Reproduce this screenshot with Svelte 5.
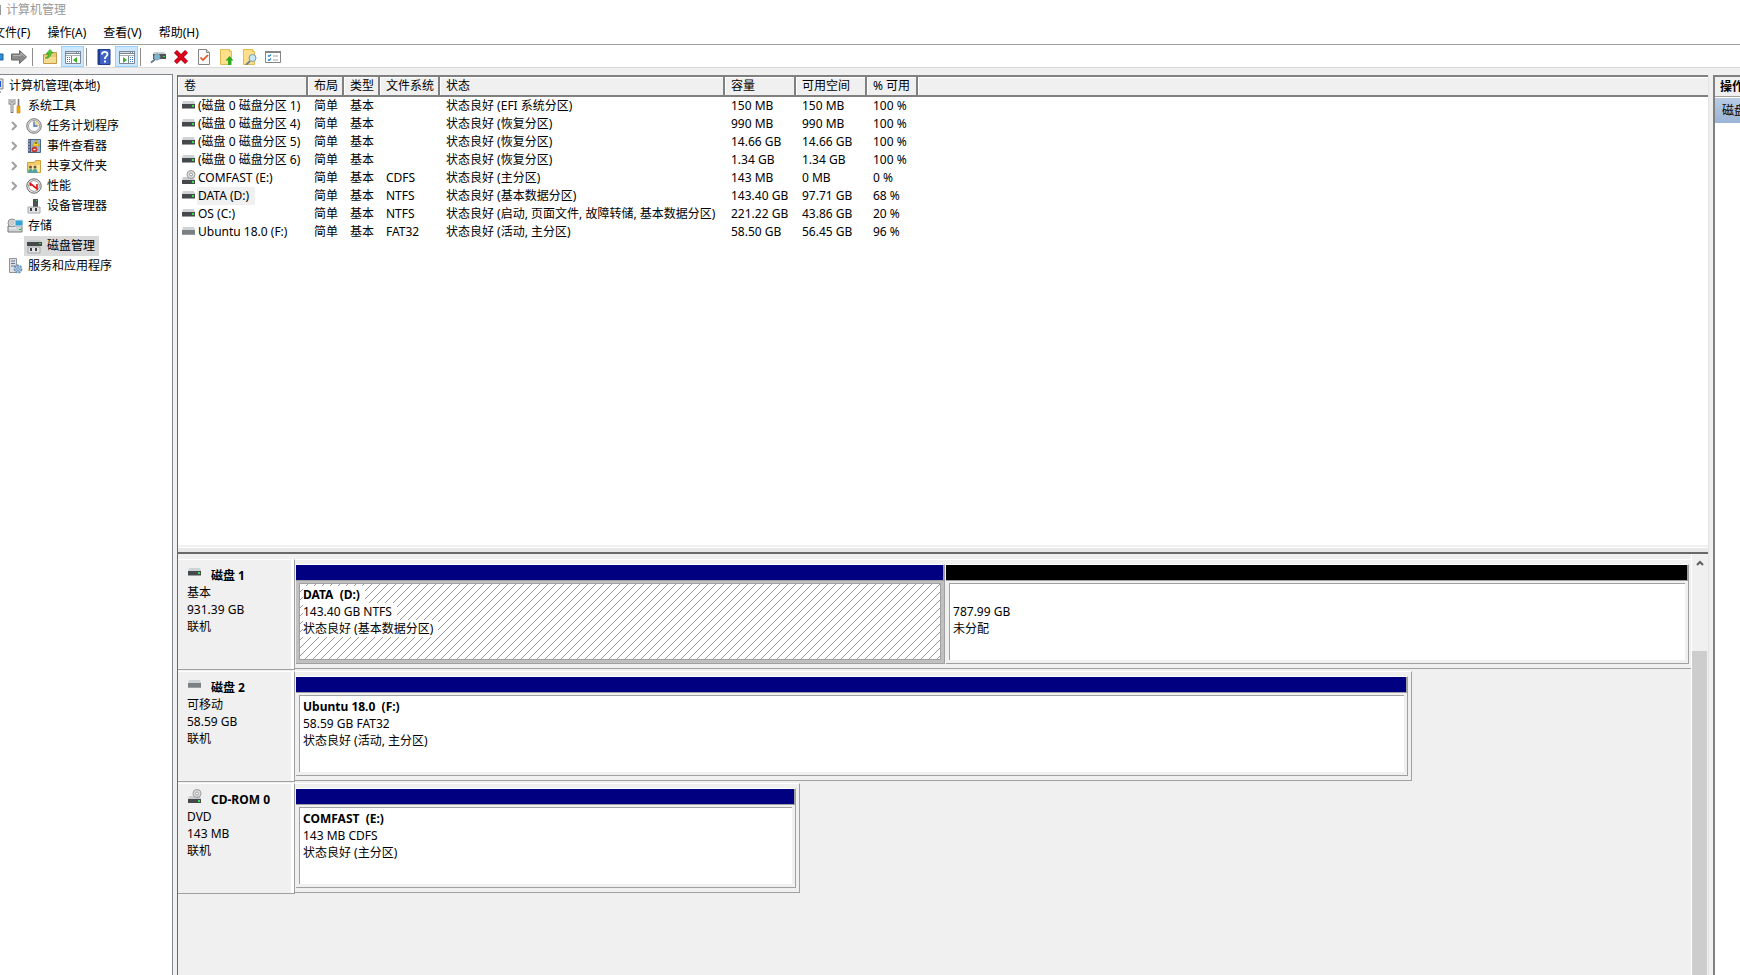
<script>
  const menus = ['文件(F)', '操作(A)', '查看(V)', '帮助(H)'];

  // null marks a separator
  const tools = [
    { icon: 'back', label: '后退' },
    { icon: 'forward', label: '前进' },
    null,
    { icon: 'folder', label: '上移' },
    { icon: 'tree', label: '控制台树', pressed: true },
    null,
    { icon: 'help', label: '帮助' },
    { icon: 'pane', label: '操作窗格', pressed: true },
    null,
    { icon: 'rescan', label: '重新扫描' },
    { icon: 'delete', label: '删除' },
    { icon: 'check', label: '属性' },
    { icon: 'upload', label: '打开' },
    { icon: 'search', label: '浏览' },
    { icon: 'list', label: '设置' },
  ];

  const tree = [
    { level: 0, icon: 'computer', label: '计算机管理(本地)' },
    { level: 1, icon: 'wrench', label: '系统工具' },
    { level: 2, icon: 'clock', label: '任务计划程序', closed: true },
    { level: 2, icon: 'events', label: '事件查看器', closed: true },
    { level: 2, icon: 'shared', label: '共享文件夹', closed: true },
    { level: 2, icon: 'perf', label: '性能', closed: true },
    { level: 2, icon: 'device', label: '设备管理器' },
    { level: 1, icon: 'storage', label: '存储' },
    { level: 2, icon: 'diskmgr', label: '磁盘管理' },
    { level: 1, icon: 'services', label: '服务和应用程序' },
  ];

  const columns = ['卷', '布局', '类型', '文件系统', '状态', '容量', '可用空间', '% 可用'];

  const volumes = [
    { icon: 'drive', cells: ['(磁盘 0 磁盘分区 1)', '简单', '基本', '', '状态良好 (EFI 系统分区)', '150 MB', '150 MB', '100 %'] },
    { icon: 'drive', cells: ['(磁盘 0 磁盘分区 4)', '简单', '基本', '', '状态良好 (恢复分区)', '990 MB', '990 MB', '100 %'] },
    { icon: 'drive', cells: ['(磁盘 0 磁盘分区 5)', '简单', '基本', '', '状态良好 (恢复分区)', '14.66 GB', '14.66 GB', '100 %'] },
    { icon: 'drive', cells: ['(磁盘 0 磁盘分区 6)', '简单', '基本', '', '状态良好 (恢复分区)', '1.34 GB', '1.34 GB', '100 %'] },
    { icon: 'cdrom', cells: ['COMFAST (E:)', '简单', '基本', 'CDFS', '状态良好 (主分区)', '143 MB', '0 MB', '0 %'] },
    { icon: 'drive', cells: ['DATA (D:)', '简单', '基本', 'NTFS', '状态良好 (基本数据分区)', '143.40 GB', '97.71 GB', '68 %'] },
    { icon: 'drive', cells: ['OS (C:)', '简单', '基本', 'NTFS', '状态良好 (启动, 页面文件, 故障转储, 基本数据分区)', '221.22 GB', '43.86 GB', '20 %'] },
    { icon: 'removable', cells: ['Ubuntu 18.0 (F:)', '简单', '基本', 'FAT32', '状态良好 (活动, 主分区)', '58.50 GB', '56.45 GB', '96 %'] },
  ];

  const disks = [
    {
      icon: 'drive', name: '磁盘 1', type: '基本', size: '931.39 GB', status: '联机', width: 100,
      parts: [
        { name: 'DATA  (D:)', size: '143.40 GB NTFS', status: '状态良好 (基本数据分区)', share: 649 },
        { name: '', size: '787.99 GB', status: '未分配', share: 743, free: true },
      ],
    },
    {
      icon: 'removable', name: '磁盘 2', type: '可移动', size: '58.59 GB', status: '联机', width: 80,
      parts: [{ name: 'Ubuntu 18.0  (F:)', size: '58.59 GB FAT32', status: '状态良好 (活动, 主分区)', share: 1 }],
    },
    {
      icon: 'cdrom', name: 'CD-ROM 0', type: 'DVD', size: '143 MB', status: '联机', width: 36.2,
      parts: [{ name: 'COMFAST  (E:)', size: '143 MB CDFS', status: '状态良好 (主分区)', share: 1 }],
    },
  ];

  let selectedNode = $state('磁盘管理');
  let selectedVolume = $state('DATA (D:)');

  function isSelected(part) {
    return part.name.replace('  ', ' ') === selectedVolume;
  }
</script>

{#snippet glyph(name)}
  <svg class="icon" width="16" height="16" viewBox="0 0 16 16" aria-hidden="true">
    {#if name === 'back'}
      <path d="M1 8l7-5v2h7v6H8v2z" fill="#2d8fd6" stroke="#1f5f99" />
    {:else if name === 'forward'}
      <path d="M15.500 8L8.500 1.500V5H.5v6h8v3.500z" fill="#8a8a8a" stroke="#666" />
      <path d="M2 6.500h8V4l4 4" fill="none" stroke="#b5b5b5" />
    {:else if name === 'folder'}
      <path d="M1.500 5.500h5l1-2h7v11h-13z" fill="#e8c877" stroke="#c39b45" />
      <path d="M2 8h12v6H2z" fill="#f4dc94" />
      <path d="M3 9c1 0 3-1 3.500-4H4l4-4.500L11 4H9c0 4-3 6-6 5z" fill="#4fc52f" stroke="#2f9a1b" stroke-width=".6" />
    {:else if name === 'tree' || name === 'pane'}
      <path d="M.5 2.500h15v12H.5z" fill="#fff" stroke="#7b8794" />
      <path d="M0 2h16v3H0z" fill="#7b8794" />
      <path d="M1 3h10v1H1z" fill="#d5dbe0" />
      <path d="M12 3h1v1h-1zM14 3h1v1h-1z" fill="#fff" />
      <path d="M1 6.500h14" stroke="#a8b0b8" />
      {#if name === 'tree'}
        <path d="M6.500 7v8" stroke="#7b8794" />
        <path d="M2 8.500h3M2 10.500h3M2 12.500h3" stroke="#3b78b5" stroke-dasharray="1 1 1" />
        <path d="M12 8v6l-4-3z" fill="#3fae2a" />
      {:else}
        <path d="M9.500 7v8" stroke="#7b8794" />
        <path d="M11 8.500h3M11 10.500h3M11 12.500h3" stroke="#3b78b5" stroke-dasharray="1 1 1" />
        <path d="M4 8v6l4-3z" fill="#3fae2a" />
      {/if}
    {:else if name === 'help'}
      <path d="M2 .5h12v15H2z" fill="#3f63c4" stroke="#233f8e" />
      <path d="M2 1h2v14H2z" fill="#213b8c" />
      <path d="M6 5.500C6 2 11.500 2 11.500 5.300c0 2-2.700 2.200-2.700 4.700" fill="none" stroke="#fff" stroke-width="1.800" />
      <path d="M8 11.500h2v2H8z" fill="#fff" />
    {:else if name === 'rescan'}
      <path d="M4 3h10l2 2H3z" fill="#c9cdd0" />
      <path d="M3 5h13v5H3z" fill="#4d5255" />
      <path d="M13 7h2v1h-2z" fill="#35e035" />
      <circle cx="7" cy="8" r="3" fill="#78b9d9" stroke="#8c9ba6" />
      <path d="M5 10.500l-4 3" stroke="#56748c" stroke-width="1.600" />
    {:else if name === 'delete'}
      <path d="M2.500 2.500l11 11M13.500 2.500l-11 11" stroke="#9e0010" stroke-width="4.200" />
      <path d="M2.500 2.500l11 11M13.500 2.500l-11 11" stroke="#e0061c" stroke-width="2.800" />
    {:else if name === 'check'}
      <path d="M2.500.5h8l3 3v12h-11z" fill="#fafafa" stroke="#858585" />
      <path d="M10.500.5v3h3" fill="#ddd" stroke="#858585" />
      <path d="M4.500 8.500L7 11l5-5" fill="none" stroke="#e8501c" stroke-width="1.700" />
    {:else if name === 'upload' || name === 'search'}
      <path d="M1.500.5h9l2 2v13h-11z" fill="#ffe08a" stroke="#e3bb55" />
      <path d="M10.500.5v2h2" fill="#fff4c8" stroke="#e3bb55" />
      {#if name === 'upload'}
        <path d="M10.500 7l4 4.500h-2.500V16H9v-4.500H6.500z" fill="#2fa81e" />
      {:else}
        <path d="M8 12l-4 4" stroke="#6d8192" stroke-width="1.800" />
        <circle cx="10.500" cy="9" r="3.500" fill="#c8e8f6" stroke="#7899ad" />
      {/if}
    {:else if name === 'list'}
      <path d="M.5 2.500h15v11H.5z" fill="#fff" stroke="#858585" />
      <path d="M0 2h16v2H0z" fill="#858585" />
      <path d="M3 6.500l1 1 2-2M3 10.500l1 1 2-2" fill="none" stroke="#2587d8" stroke-width="1.200" />
      <path d="M8 7h5M8 11h5" stroke="#9ba1a6" />
    {:else if name === 'computer'}
      <path d="M1 1h14v10H1z" fill="#d8dce4" stroke="#888" />
      <path d="M3 3h10v6H3z" fill="#2456d0" />
      <path d="M4 13h9v2H4z" fill="#aaa" />
    {:else if name === 'wrench'}
      <path d="M3 1v4h4V1M5 5v10" fill="none" stroke="#777" stroke-width="2.800" />
      <path d="M3 1v4h4V1M5 5v9" fill="none" stroke="#e2e2e2" stroke-width="1.200" />
      <path d="M11.500 1v8" stroke="#777" stroke-width="1.600" />
      <path d="M10 8h3v7h-3z" fill="#f2a900" stroke="#ca8500" stroke-width=".6" />
    {:else if name === 'clock'}
      <circle cx="8" cy="8" r="7.300" fill="#dcdcdc" stroke="#777" />
      <circle cx="8" cy="8" r="5.500" fill="#f7fbff" stroke="#a3a3a3" />
      <path d="M8 3a5 5 0 0 1 5 5H8z" fill="#f6d999" />
      <path d="M8 3.500V8h3.500" fill="none" stroke="#3d77b8" stroke-width="1.300" />
    {:else if name === 'events'}
      <path d="M2.500 1.500h12v13h-12z" fill="#9cb5d5" stroke="#47688e" />
      <path d="M2 1h3v14H2z" fill="#4c5f83" />
      <path d="M1 3h3M1 6h3M1 9h3M1 12h3" stroke="#c8c8c8" />
      <path d="M10 2l3.500 6h-7z" fill="#ffd42b" stroke="#b98d00" stroke-width=".6" />
      <path d="M10 4v2" stroke="#222" />
      <circle cx="8.500" cy="11.500" r="2.500" fill="#e23b31" stroke="#a81911" stroke-width=".6" />
      <path d="M7.500 11.500h2" stroke="#fff" />
    {:else if name === 'shared'}
      <path d="M1.500 4.500h7l1-2h5v12h-13z" fill="#f1ce6b" stroke="#cda03e" />
      <path d="M3 7h11v7H3z" fill="#fbe59f" />
      <circle cx="4.500" cy="9" r="1.500" fill="#735237" />
      <circle cx="9" cy="9" r="1.500" fill="#735237" />
      <path d="M2 15c0-6 5-6 5 0zM6.500 15c0-6 5-6 5 0z" fill="#54a4a2" />
    {:else if name === 'perf'}
      <circle cx="8" cy="8" r="7.200" fill="#eee" stroke="#666" />
      <circle cx="8" cy="8" r="5.300" fill="#fff" stroke="#999" />
      <path d="M4.500 8V5.500L11 11V6" fill="none" stroke="#dc1818" stroke-width="1.700" />
    {:else if name === 'device' || name === 'diskmgr'}
      {#if name === 'device'}
        <path d="M7 1h5v8H7z" fill="#4c5053" />
        <path d="M10 2h1v1h-1z" fill="#34e34c" />
      {:else}
        <path d="M3 2h11l2 2H1z" fill="#c9cdd0" />
        <path d="M1 4h15v4H1z" fill="#45494c" />
        <path d="M13 5h2v1h-2z" fill="#34e34c" />
      {/if}
      <path d="M2 9h12v6H2z" fill="#e3e4e6" stroke="#a1a5aa" />
      <path d="M4 10h2v3H4zM9 10h2v3H9z" fill="#3c4248" />
    {:else if name === 'storage'}
      <path d="M1 8h14v6H1z" fill="#d2d5d8" stroke="#777" />
      <circle cx="5" cy="5" r="4" fill="#dadada" stroke="#8b8b8b" />
      <circle cx="5" cy="5" r="1.300" fill="#fff" stroke="#8b8b8b" stroke-width=".6" />
      <path d="M8 2h8v6H8z" fill="#31a4d8" stroke="#dce4e8" />
      <path d="M12 11h2v1h-2z" fill="#21b534" />
      <path d="M2 10h7" stroke="#f7f7f7" />
    {:else if name === 'services'}
      <path d="M2.500.5h7v14h-7z" fill="#dce0e4" stroke="#8c949c" />
      <path d="M4 3h4M4 5.500h4M4 8h4" stroke="#69747e" />
      <circle cx="11" cy="11" r="3.500" fill="#b8d3ec" stroke="#638cb2" stroke-width="1.800" stroke-dasharray="2 1" />
      <circle cx="11" cy="11" r="1.300" fill="#fff" stroke="#638cb2" />
    {:else if name === 'cdrom'}
      <path d="M2 7h11l1 3H1z" fill="#c9cdd0" />
      <circle cx="10" cy="4.500" r="4" fill="#dedede" stroke="#999" />
      <circle cx="10" cy="4.500" r="1.500" fill="#fff" stroke="#999" />
      <path d="M1 10h13v4H1z" fill="#45494c" />
      <path d="M11 11h2v2h-2z" fill="#34e34c" />
    {:else}
      <path d="M2 3h11l1 3H1z" fill="#d0d3d6" />
      <path d="M1 6h13v5H1z" fill={name === 'drive' ? '#45494c' : '#7c8083'} />
      <path d="M1 10h13v1H1z" fill="#9a9ea1" />
      {#if name === 'drive'}
        <path d="M11 7h2v2h-2z" fill="#34e34c" />
      {/if}
    {/if}
  </svg>
{/snippet}

<div class="window">
  <header class="titlebar"><span class="app-icon"></span>计算机管理</header>

  <nav class="menubar">
    {#each menus as menu}
      <button type="button">{menu}</button>
    {/each}
  </nav>

  <div class="toolbar">
    {#each tools as tool}
      {#if tool}
        <button type="button" class:pressed={tool.pressed} aria-label={tool.label}>
          {@render glyph(tool.icon)}
        </button>
      {:else}
        <span class="separator"></span>
      {/if}
    {/each}
  </div>

  <div class="content">
    <ul class="tree">
      {#each tree as node}
        <li class="level-{node.level}">
          {#if node.level === 2}
            <svg class="chevron" width="6" height="10" viewBox="0 0 6 10" aria-hidden="true">
              {#if node.closed}<path d="M1 1l4 4-4 4" />{/if}
            </svg>
          {/if}
          <button
            type="button"
            class:selected={node.label === selectedNode}
            onclick={() => (selectedNode = node.label)}
          >
            {@render glyph(node.icon)}<span>{node.label}</span>
          </button>
        </li>
      {/each}
    </ul>

    <main>
      <section class="volumes">
        <table>
          <colgroup>
            <col class="c-name" /><col class="c-short" /><col class="c-short" /><col class="c-fs" />
            <col class="c-status" /><col class="c-size" /><col class="c-size" /><col class="c-percent" /><col />
          </colgroup>
          <thead>
            <tr>
              {#each columns as column}
                <th>{column}</th>
              {/each}
              <th aria-hidden="true"></th>
            </tr>
          </thead>
          <tbody>
            {#each volumes as volume}
              <tr onclick={() => (selectedVolume = volume.cells[0])}>
                {#each volume.cells as cell, i}
                  {#if i === 0}
                    <td class="name">
                      <div>
                        {@render glyph(volume.icon)}<span class:current={cell === selectedVolume}>{cell}</span>
                      </div>
                    </td>
                  {:else}
                    <td>{cell}</td>
                  {/if}
                {/each}
                <td></td>
              </tr>
            {/each}
          </tbody>
        </table>
      </section>

      <section class="graph">
        <div class="disks">
          {#each disks as disk}
            <div class="disk">
              <div class="disk-label">
                <strong>{@render glyph(disk.icon)}{disk.name}</strong>
                <span>{disk.type}</span>
                <span>{disk.size}</span>
                <span>{disk.status}</span>
              </div>
              <div class="track">
                <div class="parts" class:full={disk.width === 100} style="width: {disk.width}%">
                  {#each disk.parts as part}
                    <div class="part" class:free={part.free} class:active={isSelected(part)} style="flex-grow: {part.share}">
                      <div class="stripe"></div>
                      <div class="frame">
                        <div class="info">
                          {#if isSelected(part)}
                            <svg class="hatch" width="100%" height="100%" aria-hidden="true">
                              <defs>
                                <pattern id="hatch" width="8" height="8" patternUnits="userSpaceOnUse">
                                  <path d="M0 7h1v1H0zM1 6h1v1H1zM2 5h1v1H2zM3 4h1v1H3zM4 3h1v1H4zM5 2h1v1H5zM6 1h1v1H6zM7 0h1v1H7z" fill="#999" />
                                </pattern>
                              </defs>
                              <rect width="100%" height="100%" fill="url(#hatch)" />
                            </svg>
                          {/if}
                          <strong>{part.name}</strong>
                          <span>{part.size}</span>
                          <span>{part.status}</span>
                        </div>
                      </div>
                    </div>
                  {/each}
                </div>
              </div>
            </div>
          {/each}
        </div>
        <div class="scrollbar">
          <button type="button" aria-label="向上滚动">
            <svg width="8" height="6" viewBox="0 0 8 6"><path d="M1 5l3-3 3 3" /></svg>
          </button>
          <div class="thumb"></div>
        </div>
      </section>
    </main>

    <aside>
      <h2>操作</h2>
      <button type="button">磁盘管理</button>
    </aside>
  </div>
</div>

<style>
  :global(body) {
    margin: 0;
    overflow: hidden;
  }

  .window {
    display: flex;
    flex-direction: column;
    height: 100vh;
    overflow: hidden;
    background: #f0f0f0;
    color: #000;
    font-family: "Noto Sans", "Noto Sans CJK SC", sans-serif;
    font-size: 12px;
    line-height: 18px;
    white-space: nowrap;
  }

  button {
    padding: 0;
    border: none;
    background: none;
    color: inherit;
    font: inherit;
  }

  .icon {
    display: block;
    flex: none;
  }

  .titlebar {
    display: flex;
    align-items: center;
    gap: 5px;
    height: 20px;
    background: #fff;
    color: #999;
  }

  .app-icon {
    width: 1px;
    height: 10px;
    background: #999;
  }

  .menubar {
    display: flex;
    gap: 17px;
    height: 22px;
    margin-left: -7px;
    padding-top: 2px;
    background: #fff;
    border-bottom: 1px solid #a0a0a0;
  }

  .toolbar {
    display: flex;
    height: 21px;
    margin-left: -16px;
    padding-top: 1px;
    background: #fff;
    border-bottom: 1px solid #d9d9d9;
  }

  .toolbar button {
    display: flex;
    align-items: center;
    justify-content: center;
    box-sizing: border-box;
    width: 23px;
    border: 1px solid transparent;
  }

  .toolbar .pressed {
    background: #cce8ff;
    border-color: #99d1ff;
  }

  .separator {
    width: 1px;
    height: 18px;
    margin: 2px 5px 0 2px;
    background: #8d8d8d;
  }

  .content {
    display: flex;
    flex: 1;
    gap: 4px;
    min-height: 0;
    padding-top: 6px;
  }

  .tree {
    flex: none;
    box-sizing: border-box;
    width: 173px;
    margin: 0;
    padding: 1px 0 0;
    list-style: none;
    background: #fff;
    border-top: 1px solid #828790;
    border-right: 1px solid #828790;
  }

  .tree li {
    display: flex;
    align-items: center;
    height: 20px;
  }

  .tree button {
    display: flex;
    align-items: center;
    height: 20px;
    padding: 0 4px 0 2px;
    gap: 5px;
  }

  .tree .selected {
    background: #d9d9d9;
  }

  .level-0 {
    margin-left: -14px;
  }

  .level-1 {
    margin-left: 5px;
  }

  .level-2 {
    margin-left: 11px;
  }

  .chevron {
    margin-right: 7px;
    fill: none;
    stroke: #a0a0a0;
    stroke-width: 2;
  }

  main {
    display: grid;
    grid-template-rows: minmax(0, 1fr) 421px;
    flex: 1;
    min-width: 0;
    margin-top: 1px;
    border-left: 1px solid #696969;
    border-right: 1px solid #e3e3e3;
  }

  .volumes {
    overflow: hidden;
    background: #fff;
    border-top: 2px solid #808080;
    border-bottom: 2px solid #696969;
    box-shadow: inset 0 -4px #e8e8e8, inset 0 -5px #fff, inset 0 -7px #f0f0f0;
  }

  table {
    width: 100%;
    table-layout: fixed;
    border-collapse: separate;
    border-spacing: 0;
  }

  .c-name {
    width: 130px;
  }

  .c-short {
    width: 36px;
  }

  .c-fs {
    width: 60px;
  }

  .c-status {
    width: 285px;
  }

  .c-size {
    width: 71px;
  }

  .c-percent {
    width: 51px;
  }

  th {
    height: 18px;
    padding: 0 0 0 6px;
    background: #f0f0f0;
    border-bottom: 2px solid #808080;
    border-right: 2px solid #808080;
    box-shadow: inset 1px 1px #fff;
    font-weight: 400;
    text-align: left;
  }

  th:last-child {
    border-right: none;
  }

  td {
    height: 18px;
    padding: 0 0 0 6px;
  }

  .name {
    padding-left: 3px;
  }

  .name div {
    display: flex;
    align-items: center;
  }

  .name span {
    padding: 0 6px 0 1px;
  }

  .current {
    background: #f0f0f0;
  }

  .graph {
    display: flex;
    min-height: 0;
    overflow: hidden;
  }

  .disks {
    flex: 1;
    min-width: 0;
    padding-top: 5px;
  }

  .disk {
    display: flex;
    height: 112px;
  }

  .disk-label {
    display: flex;
    flex-direction: column;
    box-sizing: border-box;
    width: 117px;
    height: 111px;
    padding: 7px 0 0 9px;
    border-top: 1px solid #fff;
    border-bottom: 1px solid #a0a0a0;
    border-right: 1px solid #a0a0a0;
    box-shadow: inset -3px 0 #fff;
    line-height: 17px;
  }

  .disk-label strong {
    display: flex;
    gap: 8px;
  }

  .disk-label .icon {
    margin-top: -2px;
  }

  .track {
    flex: 1;
    min-width: 0;
    height: 110px;
  }

  .parts {
    display: flex;
    gap: 1px;
    box-sizing: border-box;
    height: 110px;
    padding: 4px 3px 4px 1px;
    border-top: 1px solid #fff;
    border-right: 1px solid #a0a0a0;
    border-bottom: 1px solid #a0a0a0;
  }

  .parts.full {
    padding-right: 2px;
    border-right: none;
  }

  .part {
    display: flex;
    flex-direction: column;
    flex-basis: 0;
    box-sizing: border-box;
    min-width: 0;
    border-top: 1px solid #fff;
    border-right: 1px solid #a0a0a0;
    border-bottom: 1px solid #a0a0a0;
  }

  .stripe {
    height: 15px;
    background: #000080;
    border-right: 1px solid #a0a0a0;
    border-bottom: 1px solid #a0a0a0;
  }

  .free .stripe {
    background: #000;
  }

  .frame {
    flex: 1;
    display: flex;
    padding: 2px 3px 3px;
  }

  .active .frame {
    background: #c0c0c0;
  }

  .info {
    position: relative;
    display: flex;
    flex: 1;
    flex-direction: column;
    align-items: flex-start;
    padding: 2px 0 0 3px;
    background: #fff;
    border-top: 1px solid #a0a0a0;
    border-left: 1px solid #a0a0a0;
    line-height: 17px;
  }

  .active .info {
    border: 1px solid #a0a0a0;
  }

  .info strong {
    min-height: 17px;
    white-space: pre;
  }

  .info strong,
  .info span {
    position: relative;
    padding-right: 5px;
    background: #fff;
  }

  .hatch {
    position: absolute;
    inset: 0;
  }

  .scrollbar {
    display: flex;
    flex-direction: column;
    width: 15px;
    padding-right: 1px;
    border-left: 1px solid #fff;
  }

  .scrollbar button {
    display: flex;
    flex: none;
    align-items: center;
    justify-content: center;
    height: 17px;
    margin-bottom: 80px;
  }

  .scrollbar path {
    fill: none;
    stroke: #606060;
    stroke-width: 2;
  }

  .thumb {
    flex: 1;
    background: #cdcdcd;
  }

  aside {
    width: 25px;
    margin-top: 1px;
    overflow: hidden;
    background: #fff;
    border-top: 2px solid #808080;
    border-left: 2px solid #808080;
  }

  aside h2 {
    height: 19px;
    margin: 0;
    padding-left: 5px;
    background: #f0f0f0;
    border-bottom: 1px solid #a0a0a0;
    font-size: 12px;
    line-height: 19px;
  }

  aside button {
    height: 25px;
    margin-top: 1px;
    padding: 0 7px;
    background: linear-gradient(#b8cce4, #9ab4d6);
  }
</style>
